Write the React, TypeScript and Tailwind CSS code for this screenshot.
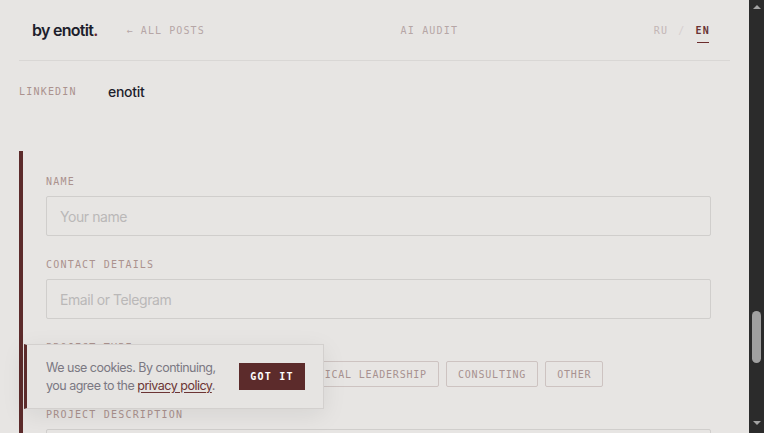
import { useState } from 'react';

const MONO = "font-['DejaVu_Sans_Mono','Liberation_Mono',monospace]";
const SANS = "font-['Inter','Noto_Sans',sans-serif]";

const PROJECT_TYPES = ['AI INTEGRATION', 'DEVELOPMENT', 'TECHNICAL LEADERSHIP', 'CONSULTING', 'OTHER'];

function FieldLabel({ children }: { children: React.ReactNode }) {
  return (
    <div className={`${MONO} text-[10px] leading-[12px] tracking-[0.12em] text-[#ab928e]`}>{children}</div>
  );
}

function TextField({ placeholder }: { placeholder: string }) {
  return (
    <input
      placeholder={placeholder}
      className={`${SANS} mt-[8px] h-[40px] w-full rounded-[2px] border border-[#d0cecc] bg-[#e7e5e3] px-[13px] text-[14px] tracking-[-0.03em] text-[#2a2a2a] outline-none placeholder:text-[#bab8b8]`}
    />
  );
}

function Scrollbar() {
  return (
    <div className="flex h-full w-[15px] flex-col items-center bg-[#2b2b2b]">
      {/* up arrow */}
      <div className="mt-[5px] h-0 w-0 border-x-[4px] border-b-[4px] border-x-transparent border-b-[#a3a3a3]" />
      {/* thumb */}
      <div className="mt-[302px] h-[52px] w-[9px] rounded-full bg-[#a0a0a0]" />
      <div className="flex-1" />
      {/* down arrow */}
      <div className="mb-[8px] h-0 w-0 border-x-[4px] border-t-[4px] border-x-transparent border-t-[#a3a3a3]" />
    </div>
  );
}

export default function App() {
  const [type, setType] = useState<string | null>(null);
  const [cookies, setCookies] = useState(true);

  return (
    <div className="relative flex h-[433px] w-[764px] overflow-hidden bg-[#e7e5e3]">
      <div className="flex min-w-0 flex-1 flex-col">
        {/* Header */}
        <div className="px-[19px]">
          <div className="flex h-[61px] items-center justify-between border-b border-[#d9d7d5] pl-[13px] pr-[20px]">
            <div className="flex items-center">
              <span className={`${SANS} text-[16px] font-semibold tracking-[-0.045em] text-[#1d1e2c]`}>
                by enotit<span className="text-[#6b2c2c]">.</span>
              </span>
              <span className={`${MONO} ml-[29px] text-[10px] tracking-[0.11em] text-[#b6a6a6]`}>← ALL POSTS</span>
            </div>
            <span className={`${MONO} text-[10px] tracking-[0.12em] text-[#b6a6a6]`}>AI AUDIT</span>
            <div className={`${MONO} flex items-center text-[10px] tracking-[0.12em]`}>
              <span className="text-[#c3b5b5]">RU</span>
              <span className="mx-[10px] text-[#d6cfcf]">/</span>
              <span className="relative font-bold text-[#6a3434]">
                EN
                <span className="absolute left-[1px] right-[1px] top-[19px] h-[1px] bg-[#6b2c2c]" />
              </span>
            </div>
          </div>
        </div>

        {/* Content */}
        <div className="px-[19px]">
          <div className="mt-[20px] flex items-center">
            <span className={`${MONO} w-[89px] text-[10px] tracking-[0.12em] text-[#ab928e]`}>LINKEDIN</span>
            <span className={`${SANS} text-[14px] font-medium tracking-[-0.02em] text-[#1d1e2c]`}>enotit</span>
          </div>

          <div className="mt-[49px] border-l-4 border-[#5c2b2b] pl-[23px] pr-[19px] pt-[25px]">
            <FieldLabel>NAME</FieldLabel>
            <TextField placeholder="Your name" />

            <div className="mt-[23px]">
              <FieldLabel>CONTACT DETAILS</FieldLabel>
              <TextField placeholder="Email or Telegram" />
            </div>

            <div className="mt-[23px]">
              <FieldLabel>PROJECT TYPE</FieldLabel>
              <div className="mt-[7px] flex flex-wrap gap-[7px]">
                {PROJECT_TYPES.map(t => (
                  <button
                    key={t}
                    onClick={() => setType(t)}
                    className={`${MONO} h-[26px] rounded-[2px] border px-[11px] text-[10px] tracking-[0.08em] ${
                      type === t ? 'border-[#5c2b2b] bg-[#5c2b2b] text-white' : 'border-[#cdc3c1] text-[#a89290]'
                    }`}
                  >
                    {t}
                  </button>
                ))}
              </div>
            </div>

            <div className="mt-[22px]">
              <FieldLabel>PROJECT DESCRIPTION</FieldLabel>
              <TextField placeholder="Tell us about your project" />
            </div>
          </div>
        </div>
      </div>

      <Scrollbar />

      {/* Cookie banner */}
      {cookies && (
        <div className="absolute left-[24px] top-[344px] flex h-[65px] w-[300px] items-center justify-between border border-l-[3px] border-[#d3d0ce] border-l-[#5c2b2b] bg-[#e6e4e2] pl-[19px] pr-[18px] shadow-[0_6px_24px_rgba(0,0,0,0.08)]">
          <p className={`${SANS} text-[12.5px] leading-[18px] tracking-[-0.04em] text-[#7b7882]`}>
            We use cookies. By continuing,
            <br />
            you agree to the{' '}
            <a href="#" className="text-[#6b3434] underline underline-offset-2">privacy policy</a>.
          </p>
          <button
            onClick={() => setCookies(false)}
            className={`${MONO} h-[27px] w-[66px] bg-[#5c2b2b] text-[10px] font-bold tracking-[0.12em] text-white`}
          >
            GOT IT
          </button>
        </div>
      )}
    </div>
  );
}
